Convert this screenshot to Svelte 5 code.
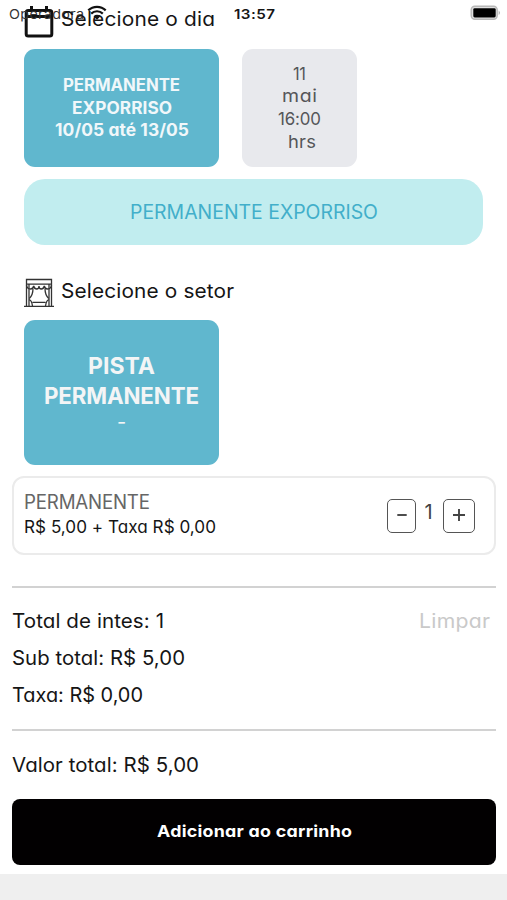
<script>
  const summary = [
    { label: 'Total de intes: 1', width: 152 },
    { label: 'Sub total: R$ 5,00', width: 173 },
    { label: 'Taxa: R$ 0,00', width: 131 }
  ];

  // Widens or narrows a line of text so that it spans the given width,
  // with a small share of the change going into the tracking.
  function fit(node, width) {
    const natural = node.getBoundingClientRect().width;
    const gaps = node.textContent.length - 1;
    const spacing = ((width - natural) * 0.25) / gaps;
    node.style.letterSpacing = `${spacing}px`;
    const tracked = natural + spacing * gaps;
    node.style.width = `${width}px`;
    node.style.transform = `scaleX(${width / tracked})`;
  }
</script>

<div class="screen">
  <div class="status">
    <span class="carrier"><span class="t" use:fit={75}>Operadora</span></span>
    <svg class="wifi" width="20" height="16" viewBox="0 0 20 16">
      <path d="M1.300 5.400a12.400 12.400 0 0 1 17.400 0M4.200 8.600a8.300 8.300 0 0 1 11.600 0" fill="none" stroke="#111" stroke-width="2.200" />
      <path d="M6.500 11.200a5 5 0 0 1 7 0L10 14.800z" fill="#111" />
    </svg>
    <span class="clock"><span class="t" use:fit={41}>13:57</span></span>
    <svg class="battery" width="32" height="16" viewBox="0 0 32 16">
      <rect x="1.200" y="1.200" width="26" height="13" rx="3.600" fill="#e0e0e0" stroke="#b8b8b8" stroke-width="1.400" />
      <rect x="3.300" y="3.200" width="22.400" height="9.200" rx="1.400" fill="#000" />
      <path d="M28.700 5.400q2.400 2.300 0 4.600z" fill="#aaa" />
    </svg>
  </div>

  <div class="heading day">
    <svg width="30" height="34" viewBox="0 0 30 34" fill="none" stroke="#111" stroke-width="3">
      <rect x="2.200" y="6.500" width="25.600" height="25.500" rx="2" />
      <path d="M2 12.500h26M7.500 2v5M22.500 2v5" />
    </svg>
    <span class="t" use:fit={154}>Selecione o dia</span>
  </div>

  <div class="days">
    <div class="card period">
      <span class="t" use:fit={117}>PERMANENTE</span>
      <span class="t" use:fit={100}>EXPORRISO</span>
      <span class="t" use:fit={134}>10/05 até 13/05</span>
    </div>
    <div class="card session">
      <span class="t" use:fit={13}>11</span>
      <span class="t" use:fit={35}>mai</span>
      <span class="t" use:fit={43}>16:00</span>
      <span class="t hrs" use:fit={28}>hrs</span>
    </div>
  </div>

  <div class="banner"><span class="t" use:fit={248}>PERMANENTE EXPORRISO</span></div>

  <div class="heading sector">
    <svg width="30" height="30" viewBox="0 0 30 30" fill="none" stroke="#333" stroke-width="1.300">
      <path d="M2.500 28V1.500h25V28M2.500 6.200h25M5 6.200V28M25 6.200V28M0 28.400h30" />
      <path d="M2.500 7q.5 4 4 4 2.500 0 3.200-3 .7 3 3 3t2.300-3q0 3 2.300 3t3-3q.7 3 3.200 3 3.500 0 4-4" />
      <path d="M9 10.500Q9 17 5.300 20.500M21 10.500Q21 17 24.700 20.500M5 22q2.500-.5 3.500 6M25 22q-2.500-.5-3.500 6M8.500 24.300h13" />
    </svg>
    <span class="t" use:fit={173}>Selecione o setor</span>
  </div>

  <div class="card floor">
    <span class="t" use:fit={67}>PISTA</span>
    <span class="t" use:fit={155}>PERMANENTE</span>
    <span class="dash">-</span>
  </div>

  <div class="ticket">
    <div class="info">
      <span class="name"><span class="t" use:fit={126}>PERMANENTE</span></span>
      <span class="price"><span class="t" use:fit={192}>R$ 5,00 + Taxa R$ 0,00</span></span>
    </div>
    <div class="stepper">
      <button class="minus" aria-label="-"><svg width="14" height="14" viewBox="0 0 14 14"><path d="M2.300 7h9.400" /></svg></button>
      <span class="qty">1</span>
      <button class="plus" aria-label="+"><svg width="14" height="14" viewBox="0 0 14 14"><path d="M1 7h12M7 1v12" /></svg></button>
    </div>
  </div>

  <div class="totals">
    <div class="lines">
      {#each summary as row}
        <div class="row"><span class="t" use:fit={row.width}>{row.label}</span></div>
      {/each}
    </div>
    <div class="row clear"><span class="t" use:fit={71}>Limpar</span></div>
  </div>
  <div class="grand"><span class="t" use:fit={187}>Valor total: R$ 5,00</span></div>

  <button class="add"><span class="t" use:fit={195}>Adicionar ao carrinho</span></button>
  <div class="bottom"></div>
</div>

<style>
  :global(body) { margin: 0; background: #fff; }
  .screen {
    position: relative;
    display: flex;
    flex-direction: column;
    width: 507px;
    height: 900px;
    overflow: hidden;
    background: #fff;
    color: #151515;
    font: 400 20px/24px Inter, "Open Sans", sans-serif;
    font-feature-settings: "cv11" 1;
  }
  .t {
    display: inline-block;
    flex: none;
    white-space: nowrap;
    text-align: left;
    transform-origin: left center;
  }
  button { padding: 0; font: inherit; font-feature-settings: inherit; }
  .status {
    position: absolute;
    top: 0;
    left: 0;
    right: 0;
    height: 28px;
    display: flex;
    align-items: center;
    font-size: 13px;
    font-feature-settings: normal;
  }
  .carrier { margin-left: 8.500px; width: 78px; color: #333; }
  .wifi { margin-top: -2px; }
  .clock { margin-left: 127px; font-size: 13.500px; font-weight: 600; }
  .battery { position: absolute; left: 470px; top: 5px; }
  .heading { display: flex; gap: 7px; padding-left: 24px; flex: none; }
  .day { height: 49px; }
  .day svg { margin-top: 4px; }
  .day .t { margin-top: 7px; }
  .days { display: flex; gap: 23px; padding-left: 24px; height: 118px; flex: none; }
  .card {
    display: flex;
    flex-direction: column;
    align-items: center;
    justify-content: center;
    width: 195px;
    border-radius: 11px;
    background: #60b7ce;
    color: #f1f7fa;
    font-weight: 700;
  }
  .period { font-size: 17px; line-height: 22.500px; }
  .session {
    width: 115px;
    background: #e8e9ed;
    color: #555659;
    font-size: 17.500px;
    font-weight: 400;
    line-height: 22.700px;
  }
  .hrs { margin-left: 4px; }
  .banner {
    display: flex;
    align-items: center;
    justify-content: center;
    box-sizing: border-box;
    flex: none;
    height: 66px;
    margin: 12px 24px 0;
    padding-bottom: 1px;
    border-radius: 21px;
    background: #c1edef;
    color: #42afca;
    font-size: 19.500px;
  }
  .sector { margin-top: 33px; height: 42px; }
  .sector .t { margin-top: 1px; }
  .floor {
    box-sizing: border-box;
    flex: none;
    height: 145px;
    margin-left: 24px;
    padding-top: 2px;
    font-size: 23px;
    line-height: 30px;
    color: #f3f5f6;
  }
  .dash { font-size: 20px; line-height: 22px; padding-bottom: 4px; font-weight: 400; }
  .ticket {
    display: flex;
    justify-content: space-between;
    box-sizing: border-box;
    flex: none;
    height: 79px;
    margin: 11px 11.500px 0 12px;
    padding: 12px 18.500px 0 10px;
    border: 2px solid #ebebeb;
    border-radius: 12px;
  }
  .info { display: flex; flex-direction: column; }
  .name { height: 25px; color: #666; font-size: 19.500px; }
  .price { font-size: 17px; }
  .stepper { display: flex; height: 34px; margin-top: 9px; }
  .stepper button {
    display: flex;
    align-items: center;
    justify-content: center;
    box-sizing: border-box;
    height: 34px;
    padding-bottom: 3px;
    border: 1.500px solid #555;
    border-radius: 5px;
    background: #fff;
  }
  .stepper path { stroke: #444; stroke-width: 1.900; }
  .minus { width: 29px; }
  .plus { width: 32px; }
  .qty { box-sizing: border-box; width: 27px; padding: 1px 2px 0 0; text-align: center; color: #444; }
  .totals {
    display: flex;
    justify-content: space-between;
    box-sizing: border-box;
    flex: none;
    height: 145px;
    margin: 31px 11.500px 0 12px;
    padding: 15px 6px 0 0;
    border-top: 2px solid #d2d2d2;
    border-bottom: 2px solid #d2d2d2;
  }
  .row { height: 37px; line-height: 37px; }
  .clear { color: #c9c9c9; }
  .grand { flex: none; margin: 22px 12px 0; height: 46px; }
  .add {
    display: flex;
    align-items: center;
    justify-content: center;
    box-sizing: border-box;
    flex: none;
    height: 66px;
    margin: 0 11px 0 12px;
    padding-bottom: 2px;
    border: 0;
    border-radius: 8px;
    background: #020001;
    color: #fff;
    font-size: 16.500px;
    font-weight: 700;
  }
  .bottom { margin-top: 9px; flex: 1; background: #efefef; }
</style>
